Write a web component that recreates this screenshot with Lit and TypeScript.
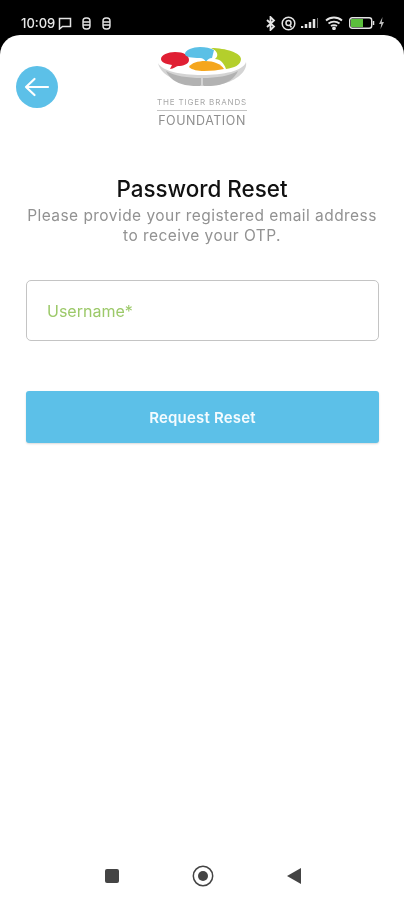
import { LitElement, html, css, svg } from 'lit';
import { customElement } from 'lit/decorators.js';

@customElement('app-root')
export class AppRoot extends LitElement {
  static styles = css`
    :host {
      display: flex;
      flex-direction: column;
      width: 404px;
      height: 900px;
      background: #000;
      overflow: hidden;
      font-family: Inter, 'Liberation Sans', sans-serif;
      filter: blur(0.4px);
    }

    .status-bar {
      flex: none;
      height: 35px;
      display: flex;
      align-items: center;
      justify-content: space-between;
      padding: 11px 19px 0 21px;
      box-sizing: border-box;
      color: #e8e8e8;
    }

    .status-left,
    .status-right {
      display: flex;
      align-items: center;
    }

    .time {
      font-size: 13px;
      font-weight: 500;
      margin-right: 3px;
    }

    .status-bar svg {
      display: block;
      fill: none;
      stroke: #e4e4e4;
    }

    .sheet {
      flex: 1;
      display: flex;
      flex-direction: column;
      background: #fff;
      border-radius: 20px 20px 0 0;
    }

    .header {
      display: grid;
      grid-template-columns: 1fr auto 1fr;
      padding: 10px 16px 0;
      height: 83px;
    }

    .back {
      width: 42px;
      height: 42px;
      margin-top: 21px;
      border-radius: 50%;
      background: #5cc0e8;
      display: flex;
      align-items: center;
      justify-content: center;
    }

    .logo {
      display: flex;
      flex-direction: column;
      align-items: center;
      width: 92px;
    }

    .logo svg {
      display: block;
    }

    .logo-small {
      font-size: 8px;
      letter-spacing: 0.85px;
      color: #a8a8a8;
      white-space: nowrap;
      margin-top: 2px;
      line-height: 10px;
      padding-bottom: 3px;
      border-bottom: 1px solid #c4c4c4;
    }

    .logo-large {
      font-size: 12.5px;
      letter-spacing: 0.55px;
      color: #8f8f8f;
      line-height: 15px;
      margin-top: 2px;
    }

    .intro {
      margin-top: 48px;
      text-align: center;
    }

    h1 {
      margin: 0;
      font-size: 22.4px;
      line-height: 26px;
      font-weight: 500;
      color: #111;
    }

    .intro p {
      margin: 4px 0 0;
      font-size: 15.5px;
      line-height: 20px;
      letter-spacing: 0.45px;
      color: #929292;
    }

    .form {
      display: flex;
      flex-direction: column;
      gap: 50px;
      margin-top: 34px;
      padding: 0 25px 0 26px;
    }

    .field {
      height: 61px;
      box-sizing: border-box;
      display: flex;
      align-items: center;
      padding-left: 20px;
      border: 1px solid #c4c4c4;
      border-radius: 5px;
      font-size: 16px;
      color: #9cc969;
    }

    .submit {
      height: 52px;
      display: flex;
      align-items: center;
      justify-content: center;
      background: #5cc0e8;
      border-radius: 3px;
      box-shadow: 0 1px 2px rgba(0, 0, 0, 0.15);
      color: #f4fbfe;
      font-size: 15px;
      letter-spacing: 0.2px;
      font-weight: 600;
    }

    .nav {
      margin-top: auto;
      height: 48px;
      display: flex;
      align-items: center;
      justify-content: space-between;
      padding: 0 102px 0 104px;
    }

    .nav svg {
      display: block;
    }
  `;

  private renderSim() {
    return html`<svg width="11" height="13" viewBox="0 0 11 13" stroke-width="1.4" style="margin-left:9px">
      <rect x="2" y="1" width="7" height="11" rx="3"></rect>
      <path d="M2 5h7M2 8h7"></path>
    </svg>`;
  }

  private renderStatusBar() {
    return html`<div class="status-bar">
      <div class="status-left">
        <span class="time">10:09</span>
        <svg width="14" height="13" viewBox="0 0 14 13" stroke-width="1.5">
          <path d="M1.5 1.5h11v8h-8l-3 2.5z"></path>
        </svg>
        ${this.renderSim()} ${this.renderSim()}
      </div>
      <div class="status-right">
        <svg width="10" height="15" viewBox="0 0 10 15" stroke-width="1.8">
          <path d="M1 4l7 6.5-3.5 3.5v-13L8 4.5 1 11"></path>
        </svg>
        <svg width="15" height="15" viewBox="0 0 15 15" stroke-width="1.5" style="margin-left:5px">
          <circle cx="7.5" cy="7.5" r="6.3"></circle>
          <circle cx="7.5" cy="7" r="2.5"></circle>
          <path d="M9 9.5l1.5 2"></path>
        </svg>
        <svg width="18" height="12" viewBox="0 0 18 12" style="margin-left:5px">
          <path d="M1 9v2M5 7v4M9 5v6M13 2v9" stroke-width="2.5"></path>
          <path d="M16.5 1v10" stroke-width="1" opacity="0.5"></path>
        </svg>
        <svg width="18" height="14" viewBox="0 0 18 14" stroke-width="1.8" style="margin-left:6px">
          <path d="M1 4.5c4.5-4 11.500-4 16 0M3.500 7.500c3-2.500 8-2.500 11 0M6 10c1.500-1 4.500-1 6 0"></path>
          <circle cx="9" cy="12.300" r="1" fill="#e4e4e4"></circle>
        </svg>
        <svg width="26" height="12" viewBox="0 0 26 12" stroke-width="1.4" style="margin-left:6px">
          <rect x="0.700" y="0.700" width="22" height="10.600" rx="2.500"></rect>
          <rect x="2" y="2" width="12" height="8" fill="#5bbf3c" stroke="none"></rect>
          <path d="M24.500 4v4" stroke-width="1.500"></path>
        </svg>
        <svg width="7" height="12" viewBox="0 0 7 12" style="margin-left:3px">
          <path d="M4.500 0L1 7h2.200L2.500 12 6 5H3.800z" fill="#bbb" stroke="none"></path>
        </svg>
      </div>
    </div>`;
  }

  private renderBowl() {
    return svg`
      <path d="M2 18c4 8 22 12 44 12s41-4 44-13c2 9-10 19-24 22-7 2-14 2-19 2-16 0-42-8-45-23z" fill="#d4d4d4"></path>
      <path d="M10 26c9 5 22 7 35 7v7l-1 1c-4 0-9 0-15-1-9-2-16-7-19-14z" fill="#b2b2b2"></path>
      <path d="M82 26c-9 5-22 7-35 7v7l1 1c4 0 9 0 15-1 9-2 16-7 19-14z" fill="#b2b2b2"></path>
      <path d="M5 14c0-4 7-7 14-7 9 0 14 3 14 8 0 4-6 6-11 6-2 0-4 3-8 3l2-4c-7-1-11-3-11-6z" fill="#e01f33"></path>
      <path d="M29 9c0-4 8-7 15-7 6 0 10 1 14 3l-2 8c-3 0-4 1-6 4-2-3-3-4-6-4-8 0-15-1-15-4z" fill="#5bc0e6"></path>
      <path d="M55 3c15 0 30 5 30 11 0 6-7 9-15 10-2-6-6-10-11-10 4-3 3-8-4-11z" fill="#b4cf2c"></path>
      <path d="M33 22c2-4 9-6 16-6 9 0 16 3 19 8-6 1-12 2-20 2-6 0-12-1-15-4z" fill="#f5a61d"></path>
    `;
  }

  render() {
    return html`
      ${this.renderStatusBar()}
      <div class="sheet">
        <div class="header">
          <div class="back">
            <svg width="26" height="26" viewBox="0 0 26 26" fill="none" stroke="#fff" stroke-width="2.200" stroke-linecap="round" stroke-linejoin="round">
              <path d="M24 13H2M10.500 5L2 13l8.500 8"></path>
            </svg>
          </div>
          <div class="logo">
            <svg width="92" height="50" viewBox="0 0 92 50">${this.renderBowl()}</svg>
            <div class="logo-small">THE TIGER BRANDS</div>
            <div class="logo-large">FOUNDATION</div>
          </div>
        </div>
        <div class="intro">
          <h1>Password Reset</h1>
          <p>Please provide your registered email address<br />to receive your OTP.</p>
        </div>
        <div class="form">
          <div class="field">Username*</div>
          <div class="submit">Request Reset</div>
        </div>
        <div class="nav">
          <svg width="16" height="16" viewBox="0 0 16 16">
            <rect x="1" y="1" width="14" height="14" rx="2" fill="#444"></rect>
          </svg>
          <svg width="22" height="22" viewBox="0 0 22 22">
            <circle cx="11" cy="11" r="9.700" fill="none" stroke="#444" stroke-width="1.500"></circle>
            <circle cx="11" cy="11" r="5" fill="#444"></circle>
          </svg>
          <svg width="16" height="18" viewBox="0 0 16 18">
            <path d="M15 1v16L1 9z" fill="#444"></path>
          </svg>
        </div>
      </div>
    `;
  }
}
